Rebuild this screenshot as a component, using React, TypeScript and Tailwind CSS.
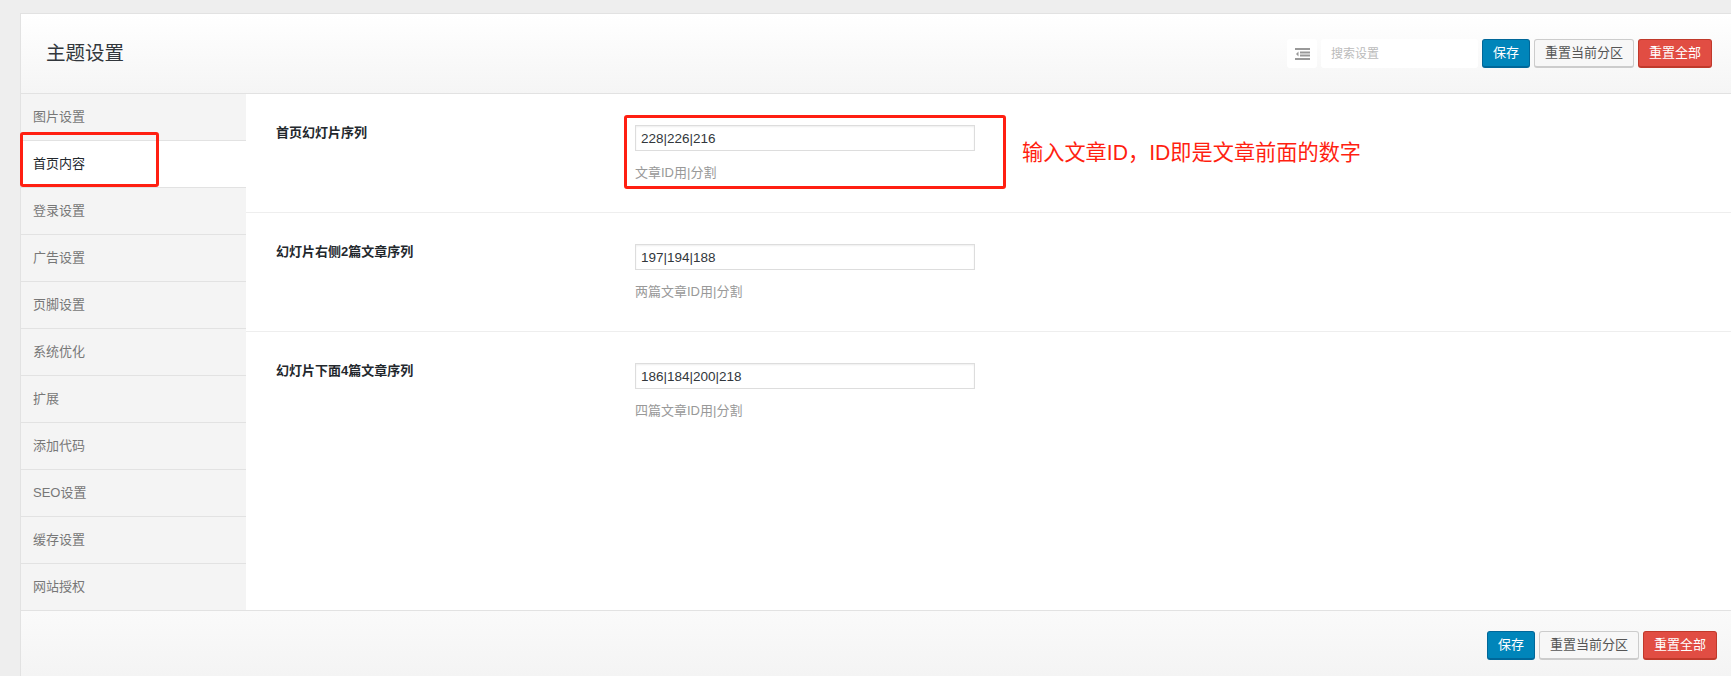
const FONT = "font-['Liberation_Sans','Noto_Sans_CJK_SC',sans-serif]"

const menu = ['图片设置', '首页内容', '登录设置', '广告设置', '页脚设置', '系统优化', '扩展', '添加代码', 'SEO设置', '缓存设置', '网站授权']

const fields = [
  { label: '首页幻灯片序列', value: '228|226|216', desc: '文章ID用|分割' },
  { label: '幻灯片右侧2篇文章序列', value: '197|194|188', desc: '两篇文章ID用|分割' },
  { label: '幻灯片下面4篇文章序列', value: '186|184|200|218', desc: '四篇文章ID用|分割' },
]

const Buttons = () => (
  <div className="flex items-center gap-1">
    <button className="h-[29px] w-[48px] rounded-[3px] border border-[#006799] border-b-2 bg-[#0085ba] text-[13px] text-white">保存</button>
    <button className="h-[29px] w-[100px] rounded-[3px] border border-[#cccccc] border-b-2 bg-[#f7f7f7] text-[13px] text-[#555555]">重置当前分区</button>
    <button className="h-[29px] w-[74px] rounded-[3px] border border-[#c0392b] border-b-2 bg-[#e14d43] text-[13px] text-white">重置全部</button>
  </div>
)

export default function App() {
  return (
    <div className={`${FONT} h-[676px] w-[1731px] overflow-hidden bg-[#eeeeee] pl-5 pt-[13px]`}>
      <div className="flex h-[663px] flex-col border-l border-t border-[#e2e2e2]">
        <header className="flex h-[80px] shrink-0 items-center justify-between border-b border-[#e2e2e2] bg-gradient-to-b from-white to-[#f5f5f5] pl-[25px] pr-[19px]">
          <h1 className="text-[19.5px] font-normal text-[#32373c]">主题设置</h1>
          <div className="flex items-center gap-1">
            <div className="flex h-[29px] w-[30px] items-center justify-center rounded-[3px] bg-white">
              <svg width="15" height="12" viewBox="0 0 15 12" fill="#999999">
                <rect x="0" y="0" width="15" height="2" />
                <rect x="5" y="3.500" width="10" height="2" />
                <rect x="5" y="6.500" width="10" height="2" />
                <rect x="0" y="10" width="15" height="2" />
                <path d="M3.500 3.500v5L1 6z" />
              </svg>
            </div>
            <div className="flex h-[29px] w-[157px] items-center rounded-[3px] bg-white pl-[10px] text-xs text-[#bbbbbb]">搜索设置</div>
            <Buttons />
          </div>
        </header>

        <div className="flex h-[516px] shrink-0 overflow-hidden bg-white">
          <nav className="w-[225px] shrink-0 bg-[#f4f4f4]">
            {menu.map((item) => (
              <div
                key={item}
                className={`flex h-[47px] items-center border-b border-[#e2e2e2] pl-3 text-[13px] ${item === '首页内容' ? 'bg-white text-[#23282d]' : 'text-[#777777]'}`}
              >
                {item}
              </div>
            ))}
          </nav>
          <main className="flex-1">
            {fields.map((f, i) => (
              <div key={f.label} className={`flex h-[119px] pl-[30px] pt-[31px] ${i < 2 ? 'border-b border-[#eeeeee]' : ''}`}>
                <div className="w-[359px] shrink-0 text-[13px] font-bold leading-4 text-[#23282d]">{f.label}</div>
                <div>
                  <div className="flex h-[26px] w-[340px] items-center border border-[#dddddd] bg-white pl-[5px] pt-[2px] text-[13.5px] text-[#32373c] shadow-[inset_0_1px_2px_rgba(0,0,0,0.07)]">{f.value}</div>
                  <p className="mt-[12px] text-[13px] text-[#999999]">{f.desc}</p>
                </div>
              </div>
            ))}
          </main>
        </div>

        <footer className="flex flex-1 items-start justify-end border-t border-[#e2e2e2] bg-gradient-to-b from-[#fafafa] to-[#f4f4f4] pr-[14px] pt-[20px]">
          <Buttons />
        </footer>
      </div>

      <div className="pointer-events-none absolute left-[20px] top-[132px] h-[55px] w-[139px] rounded-[3px] border-[3px] border-[#ff1f11]" />
      <div className="pointer-events-none absolute left-[624px] top-[115px] h-[74px] w-[382px] rounded-[3px] border-[3px] border-[#ff1f11]" />
      <div className="absolute left-[1022px] top-[139px] text-[21.2px] leading-7 text-[#ff1f11]">输入文章ID，ID即是文章前面的数字</div>
    </div>
  )
}
